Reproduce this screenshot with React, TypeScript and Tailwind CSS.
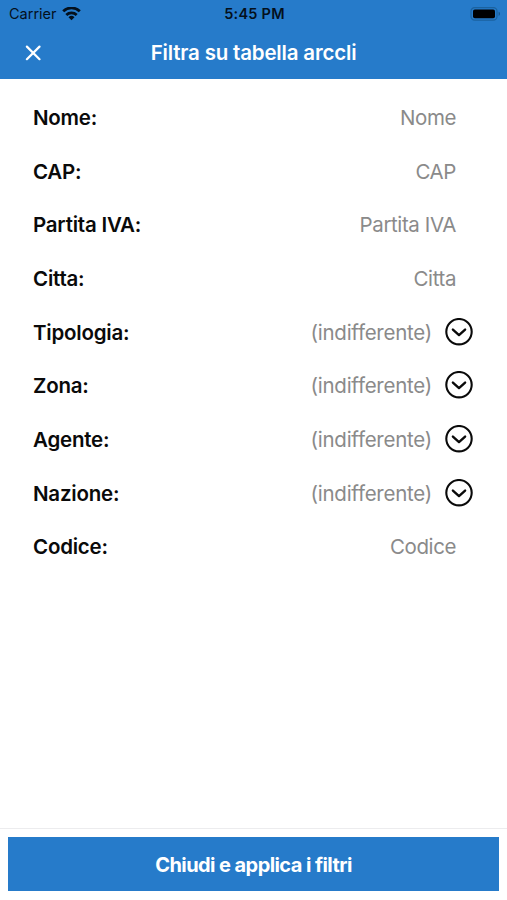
import React from "react";

type Field = {
  label: string;
  hint: string;
  select?: boolean;
};

const fields: Field[] = [
  { label: "Nome", hint: "Nome" },
  { label: "CAP", hint: "CAP" },
  { label: "Partita IVA", hint: "Partita IVA" },
  { label: "Citta", hint: "Citta" },
  { label: "Tipologia", hint: "(indifferente)", select: true },
  { label: "Zona", hint: "(indifferente)", select: true },
  { label: "Agente", hint: "(indifferente)", select: true },
  { label: "Nazione", hint: "(indifferente)", select: true },
  { label: "Codice", hint: "Codice" },
];

function WifiIcon() {
  return (
    <svg className="ml-[5px] h-[14px] w-[19px]" viewBox="0 0 19 14" fill="none" stroke="#04101c" strokeWidth="2.8" aria-hidden="true">
      <path d="M1.2 4.3a11.9 11.9 0 0 1 16.6 0" />
      <path d="M4.3 7.9a7.5 7.5 0 0 1 10.4 0" />
      <path d="M9.5 13.2 6.5 10.2a4.3 4.3 0 0 1 6 0z" fill="#04101c" stroke="none" />
    </svg>
  );
}

function BatteryIcon() {
  return (
    <svg className="h-[14px] w-[31px]" viewBox="0 0 31 14" fill="none" aria-hidden="true">
      <rect x="1" y="0.7" width="26" height="12.4" rx="3.6" stroke="#1b629f" strokeWidth="1.2" />
      <rect x="3" y="2.4" width="22" height="8.8" rx="1.8" fill="#000" />
      <path d="M28.6 4.7c1.9.6 1.9 3.6 0 4.2z" fill="#18588f" />
    </svg>
  );
}

function ChevronCircle() {
  return (
    <svg className="h-7 w-7" viewBox="0 0 28 28" fill="none" stroke="#0a0a0a" strokeWidth="2.1" strokeLinecap="round" strokeLinejoin="round" aria-hidden="true">
      <circle cx="14" cy="13.7" r="12.7" />
      <path d="m7.9 11.6 6.1 5.5 6.1-5.5" strokeWidth="2.4" />
    </svg>
  );
}

function StatusBar() {
  return (
    <div className="grid h-[27px] grid-cols-3 items-center pl-[9px] pr-[6px] text-[#04101c]">
      <div className="flex items-center text-[14.5px]">
        <span>Carrier</span>
        <WifiIcon />
      </div>
      <span className="pr-px text-center text-[14.5px] font-semibold tracking-[0.25px]">5:45 PM</span>
      <div className="flex justify-end">
        <BatteryIcon />
      </div>
    </div>
  );
}

function FieldRow({ label, hint, select }: Field) {
  return (
    <div className="flex h-[53.7px] items-center justify-between">
      <span className="pt-[3px] text-[20.5px] font-semibold tracking-[-0.22px] text-[#0a0a0a]">{label}:</span>
      {select ? (
        <button type="button" className="flex items-center gap-[13px] text-[20.5px] tracking-[-0.25px] text-[#8a8a8a]">
          <span className="pt-[3px]">{hint}</span>
          <ChevronCircle />
        </button>
      ) : (
        <span className="pr-[17px] pt-[3px] text-[20.5px] tracking-[-0.4px] text-[#8a8a8a]">{hint}</span>
      )}
    </div>
  );
}

export default function App() {
  return (
    <div className="flex h-[900px] w-[507px] flex-col overflow-hidden bg-white font-['Inter',sans-serif]">
      <header className="h-[79px] bg-[#267bca]">
        <StatusBar />
        <div className="grid h-[52px] grid-cols-[80px_1fr_80px] items-center text-white">
          <button type="button" aria-label="Chiudi" className="ml-[25px] flex w-4">
            <svg className="h-4 w-4" viewBox="0 0 16 16" fill="none" stroke="currentColor" strokeWidth="2.2" strokeLinecap="round" aria-hidden="true">
              <path d="m1.9 1.6 12.6 12.6M14.5 1.6 1.9 14.2" />
            </svg>
          </button>
          <h1 className="text-center text-[20.5px] font-semibold tracking-[-0.18px]">Filtra su tabella arccli</h1>
        </div>
      </header>

      <main className="flex-1 pl-[33px] pr-[34px] pt-[11px]">
        {fields.map((field) => (
          <FieldRow key={field.label} {...field} />
        ))}
      </main>

      <footer className="h-[72px] border-t border-[#ececee] px-2 pt-2">
        <button type="button" className="flex h-[54px] w-full items-center justify-center bg-[#267bca] pt-[2px] text-[20px] font-bold tracking-[-0.58px] text-white">
          Chiudi e applica i filtri
        </button>
      </footer>
    </div>
  );
}
